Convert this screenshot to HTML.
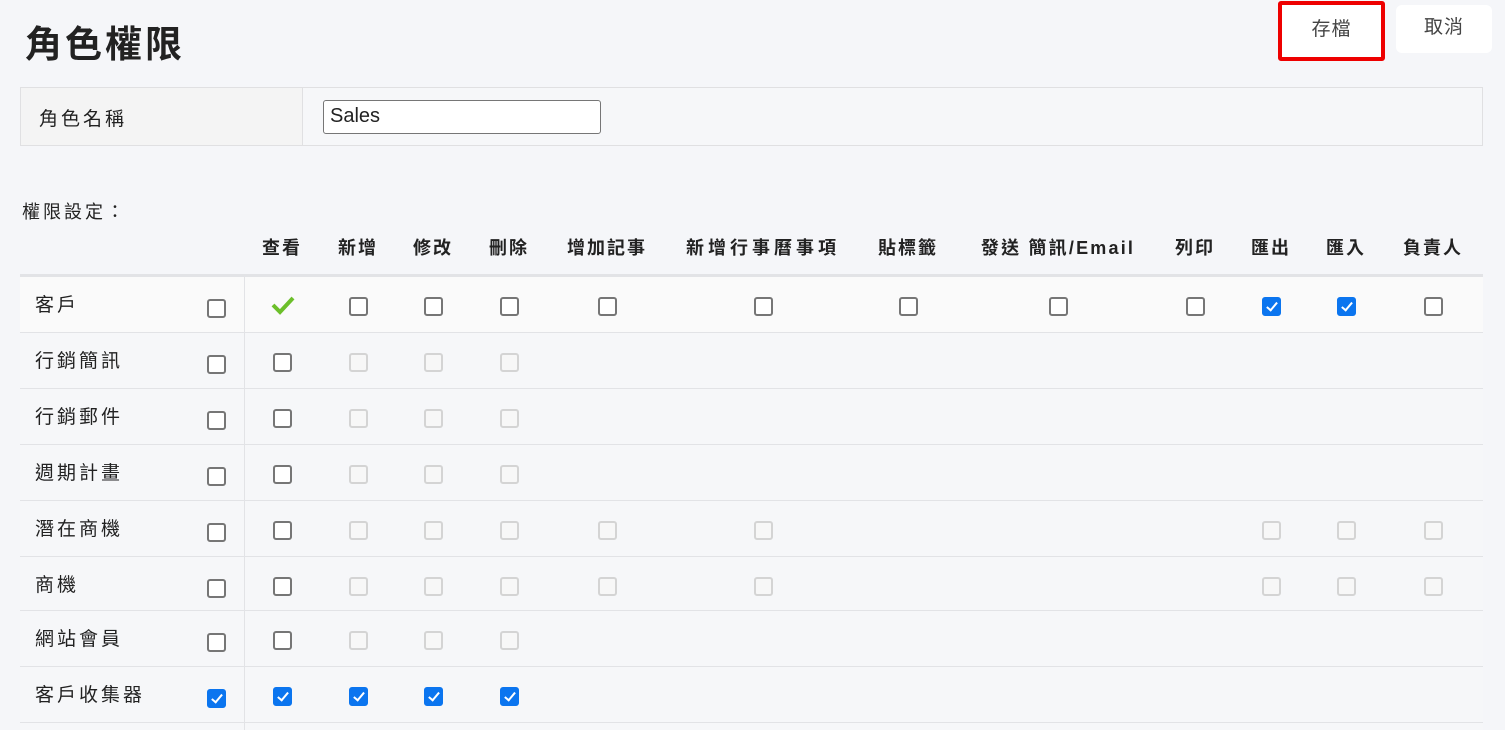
<!DOCTYPE html>
<html><head><meta charset="utf-8">
<style>
html,body{margin:0;width:1505px;height:730px;overflow:hidden}
body{background:#f5f6f9;font-family:"Liberation Sans","Noto Sans CJK TC",sans-serif;color:#222;position:relative}
.a{position:absolute}
h1{position:absolute;left:25px;top:14px;margin:0;font-size:37px;font-weight:bold;letter-spacing:3px;color:#222}
.btn{position:absolute;background:#fff;border-radius:6px;font-size:19px;color:#444;text-align:center;letter-spacing:1px}
.hd{position:absolute;top:234px;font-size:18px;font-weight:bold;letter-spacing:2px;transform:translateX(-50%);white-space:nowrap;color:#222}
.row{position:absolute;left:20px;width:1463px;height:55px;border-bottom:1px solid #e2e3e6;background:#f6f7f9}
.row .l{position:absolute;left:15px;top:13px;font-size:19px;letter-spacing:3px;color:#222}
.cb{position:absolute;top:20px;width:15px;height:15px;border:2px solid #767676;border-radius:3px;background:#fff}
.cb.r{top:22px}
.cb.d{border-color:#d4d4d4;background:#f7f7f7}
.cb.c{border-color:#0b75ef;background:#0b75ef}
.cb.c::after{content:"";position:absolute;left:5px;top:1px;width:4px;height:9px;border:solid #fff;border-width:0 2.5px 2.5px 0;transform:rotate(40deg)}
.vl{position:absolute;left:224px;top:0;width:1px;height:57px;background:#e2e3e6}
</style></head><body>
<h1>角色權限</h1>
<div class="a" style="left:1278px;top:1px;width:99px;height:52px;border:4px solid #ee0000;border-radius:3px;background:#fff"></div>
<div class="a" style="left:1282px;top:14px;width:99px;text-align:center;font-size:19px;color:#444;letter-spacing:1px">存檔</div>
<div class="btn" style="left:1396px;top:5px;width:96px;height:48px;line-height:46px">取消</div>

<div class="a" style="left:20px;top:87px;width:1461px;height:57px;border:1px solid #e0e0e2;background:#f6f7f9"></div>
<div class="a" style="left:21px;top:88px;width:281px;height:57px;background:#f4f4f4;border-right:1px solid #e0e0e2"></div>
<div class="a" style="left:39px;top:104px;font-size:19px;letter-spacing:3px">角色名稱</div>
<div class="a" style="left:323px;top:100px;width:276px;height:32px;border:1px solid #767676;border-radius:3px;background:#fff"></div>
<div class="a" style="left:330px;top:105px;font-size:20px;color:#222">Sales</div>

<div class="a" style="left:22px;top:198px;font-size:18px;letter-spacing:3px">權限設定：</div>

<div class="hd" style="left:282px">查看</div>
<div class="hd" style="left:358px">新增</div>
<div class="hd" style="left:433px">修改</div>
<div class="hd" style="left:509px">刪除</div>
<div class="hd" style="left:607px">增加記事</div>
<div class="hd" style="left:763px;letter-spacing:4px">新增行事曆事項</div>
<div class="hd" style="left:908px">貼標籤</div>
<div class="hd" style="left:1058px;letter-spacing:2.2px">發送 簡訊/Email</div>
<div class="hd" style="left:1195px">列印</div>
<div class="hd" style="left:1271px">匯出</div>
<div class="hd" style="left:1346px">匯入</div>
<div class="hd" style="left:1433px">負責人</div>

<div class="a" style="left:20px;top:274px;width:1463px;height:3px;background:#e2e3e6"></div>

<div class="row" style="top:277px;background:#fafafa"><div class="vl"></div><div class="l">客戶</div>
<span class="cb r" style="left:187px"></span>
<svg class="a" style="left:251px;top:18px" width="24" height="20" viewBox="0 0 24 20"><path d="M2 10 L9 17 L22 3" fill="none" stroke="#6cbf2a" stroke-width="4"/></svg>
<span class="cb" style="left:329px"></span><span class="cb" style="left:404px"></span><span class="cb" style="left:480px"></span><span class="cb" style="left:578px"></span><span class="cb" style="left:734px"></span><span class="cb" style="left:879px"></span><span class="cb" style="left:1029px"></span><span class="cb" style="left:1166px"></span><span class="cb c" style="left:1242px"></span><span class="cb c" style="left:1317px"></span><span class="cb" style="left:1404px"></span></div>

<div class="row" style="top:333px"><div class="vl"></div><div class="l">行銷簡訊</div>
<span class="cb r" style="left:187px"></span><span class="cb" style="left:253px"></span><span class="cb d" style="left:329px"></span><span class="cb d" style="left:404px"></span><span class="cb d" style="left:480px"></span></div>

<div class="row" style="top:389px"><div class="vl"></div><div class="l">行銷郵件</div>
<span class="cb r" style="left:187px"></span><span class="cb" style="left:253px"></span><span class="cb d" style="left:329px"></span><span class="cb d" style="left:404px"></span><span class="cb d" style="left:480px"></span></div>

<div class="row" style="top:445px"><div class="vl"></div><div class="l">週期計畫</div>
<span class="cb r" style="left:187px"></span><span class="cb" style="left:253px"></span><span class="cb d" style="left:329px"></span><span class="cb d" style="left:404px"></span><span class="cb d" style="left:480px"></span></div>

<div class="row" style="top:501px"><div class="vl"></div><div class="l">潛在商機</div>
<span class="cb r" style="left:187px"></span><span class="cb" style="left:253px"></span><span class="cb d" style="left:329px"></span><span class="cb d" style="left:404px"></span><span class="cb d" style="left:480px"></span><span class="cb d" style="left:578px"></span><span class="cb d" style="left:734px"></span><span class="cb d" style="left:1242px"></span><span class="cb d" style="left:1317px"></span><span class="cb d" style="left:1404px"></span></div>

<div class="row" style="top:557px;height:53px"><div class="vl"></div><div class="l">商機</div>
<span class="cb r" style="left:187px"></span><span class="cb" style="left:253px"></span><span class="cb d" style="left:329px"></span><span class="cb d" style="left:404px"></span><span class="cb d" style="left:480px"></span><span class="cb d" style="left:578px"></span><span class="cb d" style="left:734px"></span><span class="cb d" style="left:1242px"></span><span class="cb d" style="left:1317px"></span><span class="cb d" style="left:1404px"></span></div>

<div class="row" style="top:611px"><div class="vl"></div><div class="l">網站會員</div>
<span class="cb r" style="left:187px"></span><span class="cb" style="left:253px"></span><span class="cb d" style="left:329px"></span><span class="cb d" style="left:404px"></span><span class="cb d" style="left:480px"></span></div>

<div class="row" style="top:667px"><div class="vl"></div><div class="l">客戶收集器</div>
<span class="cb r c" style="left:187px"></span><span class="cb c" style="left:253px"></span><span class="cb c" style="left:329px"></span><span class="cb c" style="left:404px"></span><span class="cb c" style="left:480px"></span></div>

<div class="row" style="top:723px;height:7px;border-bottom:0"><div class="vl" style="height:7px"></div></div>
</body></html>
